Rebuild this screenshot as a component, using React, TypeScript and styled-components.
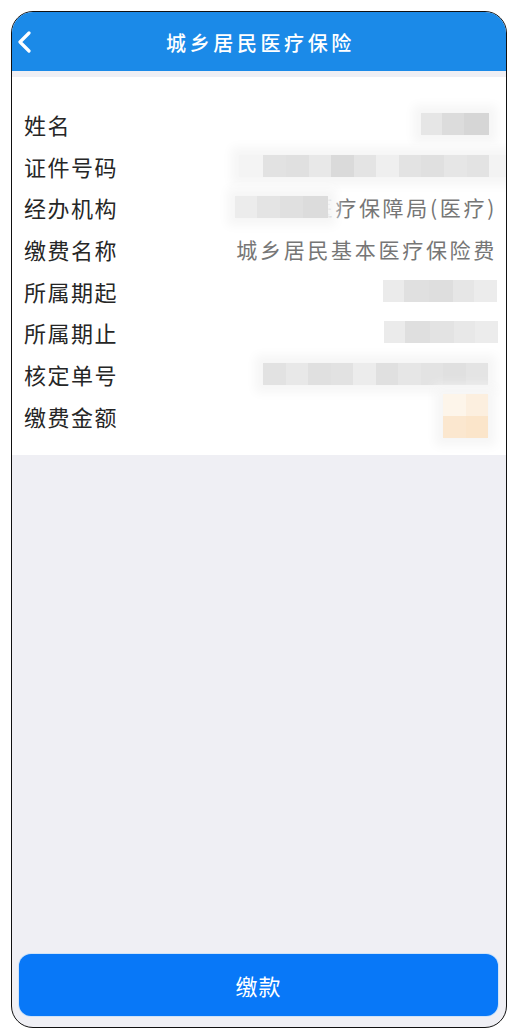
import React from "react";
import styled, { createGlobalStyle } from "styled-components";

const GlobalStyle = createGlobalStyle`
  * { box-sizing: border-box; }
  body {
    margin: 0;
    background: #ffffff;
    font-family: "Noto Sans CJK SC", "Noto Sans", sans-serif;
  }
`;

type CellData = { w: number; c: string };

interface RowData {
  label: string;
  text?: string;
  mosaic?: CellData[][];
  end?: number; // gap between the mosaic and the right edge of the row
  halo?: boolean;
}

const grey = (w: number, c: string): CellData => ({ w, c });

const rows: RowData[] = [
  {
    label: "姓名",
    mosaic: [[grey(21, "#e6e6e6"), grey(22, "#dcdcdc"), grey(25, "#d6d6d6")]],
    end: 6,
    halo: true,
  },
  {
    label: "证件号码",
    mosaic: [
      [
        grey(24, "#f4f4f4"),
        grey(23, "#e2e2e2"),
        grey(23, "#e0e0e0"),
        grey(22, "#e8e8e8"),
        grey(23, "#dadada"),
        grey(22, "#e4e4e4"),
        grey(23, "#efefef"),
        grey(22, "#e3e3e3"),
        grey(23, "#e0e0e0"),
        grey(23, "#e6e6e6"),
        grey(22, "#e3e3e3"),
        grey(17, "#f3f3f3"),
      ],
    ],
    end: -11,
    halo: true,
  },
  {
    label: "经办机构",
    text: "医疗保障局(医疗)",
    mosaic: [[grey(22, "#ececec"), grey(23, "#e4e4e4"), grey(23, "#e0e0e0"), grey(25, "#dcdcdc")]],
    end: -16,
    halo: true,
  },
  { label: "缴费名称", text: "城乡居民基本医疗保险费" },
  {
    label: "所属期起",
    mosaic: [[grey(21, "#ebebeb"), grey(25, "#e0e0e0"), grey(24, "#dedede"), grey(21, "#e6e6e6"), grey(23, "#ececec")]],
    end: -2,
  },
  {
    label: "所属期止",
    mosaic: [[grey(21, "#ebebeb"), grey(25, "#dfdfdf"), grey(24, "#e3e3e3"), grey(21, "#e8e8e8"), grey(23, "#ececec")]],
    end: -3,
  },
  {
    label: "核定单号",
    mosaic: [
      [
        grey(23, "#e2e2e2"),
        grey(22, "#e8e8e8"),
        grey(23, "#e0e0e0"),
        grey(22, "#e2e2e2"),
        grey(23, "#ececec"),
        grey(22, "#e0e0e0"),
        grey(23, "#e6e6e6"),
        grey(22, "#e3e3e3"),
        grey(23, "#e0e0e0"),
        grey(22, "#e4e4e4"),
      ],
    ],
    end: 7,
    halo: true,
  },
  {
    label: "缴费金额",
    mosaic: [
      [grey(23, "#fdf5ea"), grey(22, "#fcefdf")],
      [grey(23, "#fbe7cf"), grey(22, "#fbe5ca")],
    ],
    end: 7,
    halo: true,
  },
];

const App: React.FC = () => {
  return (
    <>
      <GlobalStyle />
      <StyledFrame>
        <StyledHeader>
          <StyledBack aria-label="返回">
            <svg width="16" height="22" viewBox="0 0 16 22" fill="none">
              <polyline
                points="12,2 3,11 12,20"
                stroke="#ffffff"
                strokeWidth="3.2"
                strokeLinecap="round"
                strokeLinejoin="round"
              />
            </svg>
          </StyledBack>
          <StyledTitle>城乡居民医疗保险</StyledTitle>
        </StyledHeader>

        <StyledCard>
          {rows.map((row, index) => (
            <StyledRow key={index}>
              <StyledLabel>{row.label}</StyledLabel>
              <StyledValue>
                {row.mosaic && (
                  <StyledMosaic $halo={!!row.halo} $end={row.end ?? 0}>
                    {row.mosaic.map((line, li) => (
                      <StyledMosaicLine key={li}>
                        {line.map((cell, ci) => (
                          <StyledCell key={ci} $w={cell.w} $c={cell.c} />
                        ))}
                      </StyledMosaicLine>
                    ))}
                  </StyledMosaic>
                )}
                {row.text && <StyledValueText>{row.text}</StyledValueText>}
              </StyledValue>
            </StyledRow>
          ))}
        </StyledCard>

        <StyledFill />

        <StyledPayButton>缴款</StyledPayButton>
      </StyledFrame>
    </>
  );
};

const StyledFrame = styled.div`
  margin: 11px 0 0 11px;
  width: 496px;
  height: 1017px;
  border: 1.5px solid #111111;
  border-radius: 22px;
  overflow: hidden;
  background: #efeff4;
  display: flex;
  flex-direction: column;
`;

const StyledHeader = styled.div`
  position: relative;
  height: 59px;
  flex-shrink: 0;
  background: #1b8ae8;
  display: flex;
  align-items: center;
  justify-content: center;
`;

const StyledBack = styled.div`
  position: absolute;
  left: 5px;
  top: 19px;
  display: flex;
`;

const StyledTitle = styled.div`
  color: #ffffff;
  font-size: 20px;
  font-weight: 500;
  letter-spacing: 3.6px;
  margin-left: 3px;
  margin-top: 1px;
`;

const StyledCard = styled.div`
  margin-top: 6px;
  background: #ffffff;
  padding: 26px 11px 18px 11px;
  display: flex;
  flex-direction: column;
`;

const StyledRow = styled.div`
  height: 41.7px;
  display: flex;
  align-items: center;
  justify-content: space-between;
`;

const StyledLabel = styled.div`
  flex-shrink: 0;
  font-size: 22px;
  letter-spacing: 1.5px;
  margin-left: 1px;
  color: #262626;
  white-space: nowrap;
`;

const StyledValue = styled.div`
  display: flex;
  align-items: center;
  justify-content: flex-end;
`;

const StyledMosaic = styled.div<{ $halo: boolean; $end: number }>`
  position: relative;
  z-index: 1;
  flex-shrink: 0;
  display: flex;
  flex-direction: column;
  box-shadow: ${(p) => (p.$halo ? "0 0 10px 8px #f6f6f6" : "none")};
  margin-right: ${(p) => p.$end}px;
`;

const StyledMosaicLine = styled.div`
  display: flex;
`;

const StyledCell = styled.span<{ $w: number; $c: string }>`
  display: block;
  flex-shrink: 0;
  width: ${(p) => p.$w}px;
  height: 22px;
  background: ${(p) => p.$c};
`;

const StyledValueText = styled.div`
  font-size: 21px;
  letter-spacing: 2.7px;
  margin-right: -2px;
  color: #767676;
  white-space: nowrap;
`;

const StyledFill = styled.div`
  flex: 1;
`;

const StyledPayButton = styled.button`
  margin: 0 8px 11px 7px;
  height: 62px;
  flex-shrink: 0;
  border: none;
  border-radius: 12px;
  background: #0878f8;
  box-shadow: 0 0 0 1px #cfe3f8;
  color: #ffffff;
  font-family: "Noto Sans CJK SC", sans-serif;
  font-size: 22px;
  letter-spacing: 1px;
`;

export default App;
